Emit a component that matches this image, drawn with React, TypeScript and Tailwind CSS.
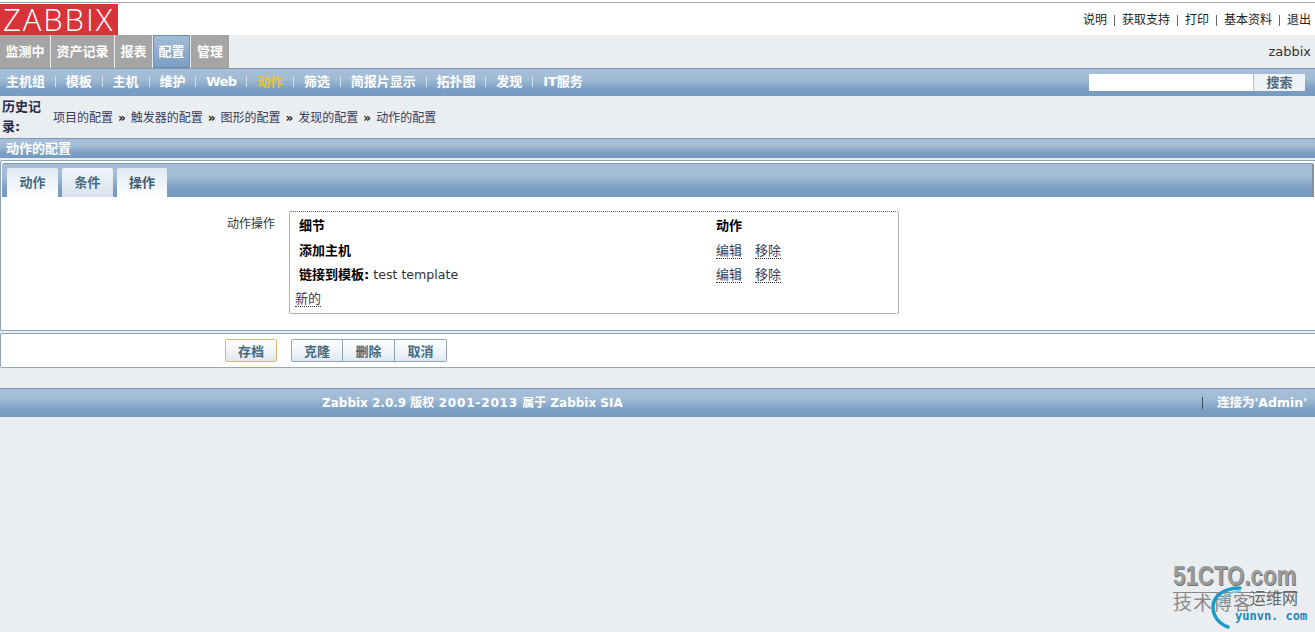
const cjk = "font-['DejaVu_Sans','Noto_Sans_CJK_SC',sans-serif]";
const barBg = "bg-[linear-gradient(#a6bed8,#a3bcd5_35%,#7a9ec3_75%,#769ac0)]";

const topLinks = ["说明", "获取支持", "打印", "基本资料", "退出"];
const mainTabs = [
  { label: "监测中", w: "w-[50px]" },
  { label: "资产记录", w: "w-[63px]" },
  { label: "报表", w: "w-[37px]" },
  { label: "配置", w: "w-[37px]", active: true },
  { label: "管理", w: "w-[38px]" },
];
const subLinks = ["主机组", "模板", "主机", "维护", "Web", "动作", "筛选", "简报片显示", "拓扑图", "发现", "IT服务"];
const crumbs = ["项目的配置", "触发器的配置", "图形的配置", "发现的配置", "动作的配置"];

const FormButton = ({ label, className }: { label: string; className: string }) => (
  <button className={`h-[23px] w-[52px] bg-[linear-gradient(#ffffff,#eef3f8_60%,#dfe8f1)] pt-[2px] text-[13px] font-bold text-[#46697f] ${className}`}>
    {label}
  </button>
);

export default function App() {
  return (
    <div className={`${cjk} flex h-[632px] w-[1315px] flex-col overflow-hidden bg-[#ebeef1] text-[13px] text-[#1f1f1f]`}>
      <header className="flex h-[35px] flex-col bg-white pt-[2px]">
        <div className="h-px bg-[#a9a9a9]" />
        <div className="flex flex-1 items-start justify-between pt-px">
          <div className="flex h-[31px] w-[118px] items-center bg-[#d83339] pl-[3px] font-['Open_Sans',sans-serif] text-[31px] font-light leading-none tracking-[1.9px] text-white">
            ZABBIX
          </div>
          <nav className="flex items-center pr-[4px] pt-[8px] text-[12px] leading-[16px] text-[#222]">
            {topLinks.map((link, i) => (
              <span key={link} className="flex items-center">
                {i > 0 && <span className="mx-[7px] h-[11px] w-px bg-[#666]" />}
                {link}
              </span>
            ))}
          </nav>
        </div>
      </header>

      <div className="flex h-[33px] items-center justify-between">
        <div className="flex h-full gap-px">
          {mainTabs.map((tab) => (
            <div
              key={tab.label}
              className={`flex ${tab.w} items-center justify-center pt-px text-[13px] font-bold text-white ${
                tab.active ? "border border-[#6f90ad] bg-[linear-gradient(#a3bcd5,#7a9ec3)]" : "bg-[#a5a5a5]"
              }`}
            >
              {tab.label}
            </div>
          ))}
        </div>
        <span className="pr-[4px] text-[13px] text-[#333]">zabbix</span>
      </div>

      <div className={`flex h-[28px] items-center justify-between border-t border-t-[#7f97af] ${barBg}`}>
        <div className="flex items-center pb-[2px] pl-[6px]">
          {subLinks.map((link, i) => (
            <span key={link} className="flex items-center">
              {i > 0 && <span className="mx-[9.9px] h-[11px] w-px bg-[#d5e0ea]" />}
              <span className={`text-[13px] font-bold ${link === "动作" ? "text-[#e8c33a]" : "text-white"} ${link === "Web" ? "tracking-[-0.6px]" : ""}`}>{link}</span>
            </span>
          ))}
        </div>
        <div className="mr-[10px] flex h-[17px] items-stretch">
          <div className="w-[164px] bg-white" />
          <div className="flex w-[52px] items-center justify-center border-l border-l-[#a9bfd3] bg-[#eef3f8] text-[13px] font-bold text-[#46697f]">
            搜索
          </div>
        </div>
      </div>

      <div className="flex h-[42px] items-center">
        <div className="w-[53px] pl-[2px] text-[13px] font-bold leading-[20px] text-[#2a2a4a]">
          <div className="w-[44px]">历史记录:</div>
        </div>
        <div className="flex items-center pt-[2px] text-[12px] text-[#3a3a5a]">
          {crumbs.map((crumb, i) => (
            <span key={crumb} className="flex items-center">
              {i > 0 && <span className="mx-[5px] text-[12px] font-bold text-[#222]">»</span>}
              {crumb}
            </span>
          ))}
        </div>
      </div>

      <div className={`flex h-[20px] items-center border-t border-t-[#7f97af] pl-[6px] pt-px text-[13px] font-bold text-white ${barBg}`}>
        动作的配置
      </div>

      <main className="-mr-[3px] mt-[2px] flex h-[171px] flex-col rounded-t-[2px] border border-[#8ba3ba] bg-white pl-px pt-[2px]">
        <div className={`mr-[3px] flex h-[34px] items-end gap-[4px] rounded-t-[2px] border-r-2 border-t border-r-[#7f8f9f] border-t-[#8097ad] pl-[5px] ${barBg}`}>
          <div className="flex h-[29px] w-[51px] items-center justify-center rounded-t-[2px] bg-[linear-gradient(#dfeaf4,#ffffff)] text-[13px] font-bold text-[#46697f]">动作</div>
          <div className="flex h-[29px] w-[51px] items-center justify-center rounded-t-[2px] bg-[linear-gradient(#f2f6fa,#d6e2ee)] text-[13px] font-bold text-[#46697f]">条件</div>
          <div className="flex h-[29px] w-[50px] items-center justify-center rounded-t-[2px] bg-[linear-gradient(#e0e9f2,#ffffff)] text-[13px] font-bold text-[#3d5a70]">操作</div>
        </div>
        <div className="-ml-px flex pt-[14px]">
          <div className="w-[274px] pt-[5px] text-right text-[12px] leading-[16px] text-[#333]">动作操作</div>
          <div className="ml-[14px] flex h-[103px] w-[610px] flex-col rounded-[2px] border border-dotted border-[#666] pl-[5px] pt-[4px]">
            <div className="flex h-[20px] items-center pl-[4px] font-bold text-black">
              <span className="w-[417px]">细节</span>
              <span>动作</span>
            </div>
            <div className="mt-[5px] flex h-[20px] items-center pl-[4px]">
              <span className="w-[417px] font-bold text-black">添加主机</span>
              <span className="border-b border-dotted border-[#333] leading-[14px] text-[#3a3a5a]">编辑</span>
              <span className="ml-[13px] border-b border-dotted border-[#333] leading-[14px] text-[#3a3a5a]">移除</span>
            </div>
            <div className="mt-[4px] flex h-[20px] items-center pl-[4px]">
              <span className="w-[417px] text-[12.6px] text-[#333]"><b className="text-[13px] text-black">链接到模板:</b> test template</span>
              <span className="border-b border-dotted border-[#333] leading-[14px] text-[#3a3a5a]">编辑</span>
              <span className="ml-[13px] border-b border-dotted border-[#333] leading-[14px] text-[#3a3a5a]">移除</span>
            </div>
            <div className="mt-[5px] flex h-[18px] items-center">
              <span className="border-b border-dotted border-[#333] leading-[14px] text-[#3a3a5a]">新的</span>
            </div>
          </div>
        </div>
      </main>

      <div className="-mr-[3px] mt-[2px] flex h-[35px] items-center rounded-[2px] border border-[#8ba3ba] border-b-[#9aa5ae] bg-white pl-[224px]">
        <FormButton label="存档" className="rounded-[2px] border border-[#e5b567]" />
        <div className="ml-[14px] flex">
          <FormButton label="克隆" className="rounded-l-[2px] border border-[#8fa3b3]" />
          <FormButton label="删除" className="border border-l-0 border-[#8fa3b3]" />
          <FormButton label="取消" className="rounded-r-[2px] border border-l-0 border-[#8fa3b3]" />
        </div>
      </div>

      <footer className={`mt-[20px] flex h-[29px] items-center border-t border-t-[#7f97af] text-[12px] font-bold text-white ${barBg}`}>
        <span className="pl-[322px]">Zabbix 2.0.9 版权 <span className="tracking-[0.85px]">2001-2013</span> 属于 Zabbix SIA</span>
        <span className="ml-auto flex items-center pr-[8px] text-[12.5px]">
          <span className="mr-[14px] h-[12px] w-px bg-[#34495e]" />
          连接为'Admin'
        </span>
      </footer>

      <div className="relative flex-1">
        <div className="absolute left-[1173px] top-[146px] h-[68px] w-[125px]">
          <div className="w-[125px] origin-left scale-x-[0.795] whitespace-nowrap font-['Liberation_Sans',sans-serif] text-[28px] font-bold leading-[26px] text-[#9b9b9b] [text-shadow:1px_1px_0_#6f6f6f]">51CTO.com</div>
          <div className="mt-[3px] h-px w-[125px] bg-[#888]" />
          <div className="absolute left-0 top-[28px] text-[19px] leading-[24px] tracking-[1px] text-[#8a8a8a]">技术博客</div>
          <div className="absolute left-[77px] top-[26px] text-[16px] leading-[20px] text-[#666]">运维网</div>
          <svg className="absolute left-[37px] top-[23px]" width="40" height="44" viewBox="0 0 40 44" fill="none">
            <path d="M30 2C14 2 3 10 3 21C3 30 9 38 18 41" stroke="#1a9bc9" strokeWidth="3.5" strokeLinecap="round" />
            <path d="M30 5C20 6 11 11 9 20" stroke="#7fc8e0" strokeWidth="2" strokeLinecap="round" />
          </svg>
          <div className="absolute left-[62px] top-[46px] whitespace-nowrap font-['DejaVu_Sans_Mono',monospace] text-[12px] font-bold leading-[14px] text-[#1a87c0]">yunvn. com</div>
        </div>
      </div>
    </div>
  );
}
